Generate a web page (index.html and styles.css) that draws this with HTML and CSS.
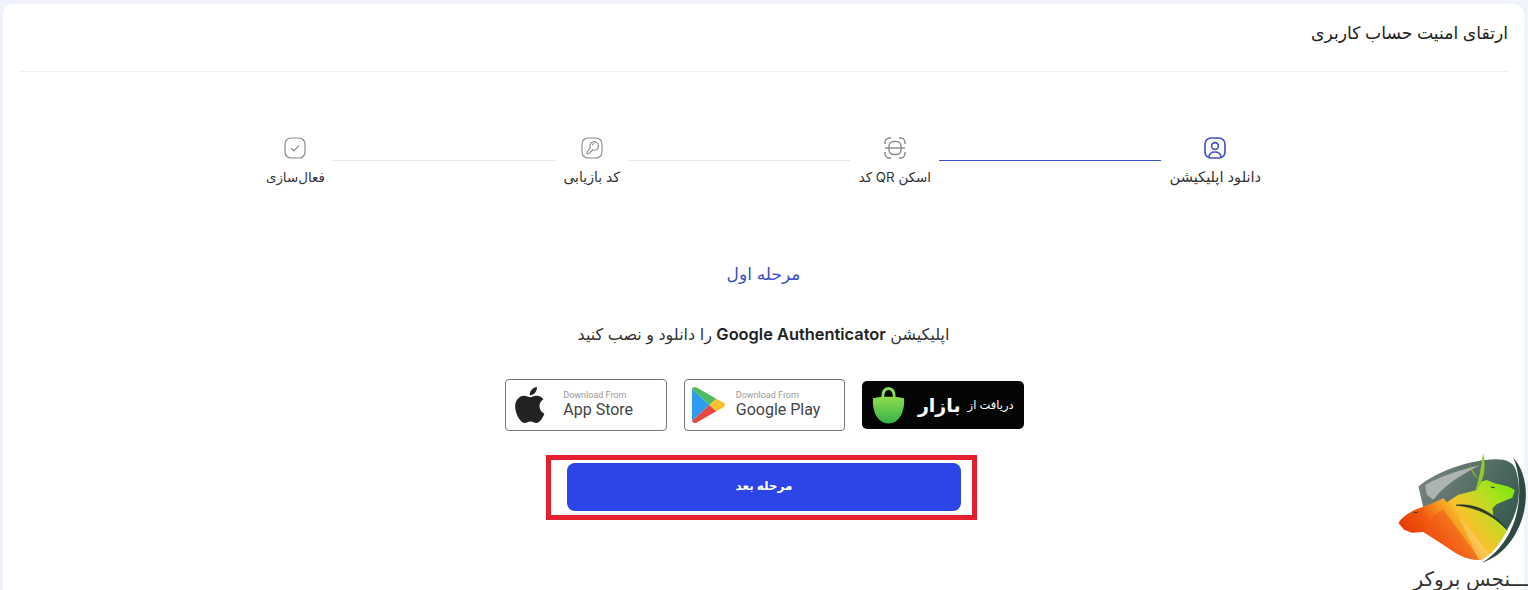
FILE: index.html
```html
<!DOCTYPE html>
<html lang="fa" dir="rtl">
<head>
  <meta charset="UTF-8" />
  <title>ارتقای امنیت حساب کاربری</title>
  <link rel="stylesheet" href="styles.css">
</head>
<body>
  <div class="card">
    <div class="card-title">ارتقای امنیت حساب کاربری</div>

    <div class="steps">
      <div class="step step-active">
        <svg class="step-icon" viewBox="0 0 22 22" fill="none" stroke="currentColor" stroke-width="1.6">
          <rect x="1" y="1" width="20" height="20" rx="6"/>
          <circle cx="11" cy="9" r="3.4"/>
          <path d="M4.800 20c.6-3.400 3-5 6.200-5s5.600 1.600 6.200 5"/>
        </svg>
        <div class="step-label step-label-wide">دانلود اپلیکیشن</div>
      </div>
      <div class="step-line step-line-active"></div>
      <div class="step">
        <svg class="step-icon" viewBox="0 0 22 22" fill="none" stroke="currentColor" stroke-width="1.4">
          <path d="M1 7V5.500A4.500 4.500 0 0 1 5.500 1H7M15 1h1.500A4.500 4.500 0 0 1 21 5.500V7M21 15v1.500a4.500 4.500 0 0 1-4.500 4.500H15M7 21H5.500A4.500 4.500 0 0 1 1 16.500V15"/>
          <rect x="5" y="4.500" width="12" height="13" rx="4.500"/>
          <path d="M1 11h20"/>
        </svg>
        <div class="step-label step-label-narrow">اسکن QR کد</div>
      </div>
      <div class="step-line"></div>
      <div class="step">
        <svg class="step-icon" viewBox="0 0 22 22" fill="none" stroke="currentColor" stroke-width="1.1">
          <rect x="1" y="1" width="20" height="20" rx="6"/>
          <path d="M9.300 10.800a4.300 4.300 0 1 1 2.400 2.200L7.800 16.600a1.100 1.100 0 0 1-1.600-.1 1.100 1.100 0 0 1-.1-1.500z"/>
          <path d="M11.200 8.500a2.200 2.200 0 0 1 2.200-2"/>
        </svg>
        <div class="step-label">کد بازیابی</div>
      </div>
      <div class="step-line"></div>
      <div class="step">
        <svg class="step-icon" viewBox="0 0 22 22" fill="none" stroke="currentColor" stroke-width="1.2">
          <rect x="1" y="1" width="20" height="20" rx="6"/>
          <path d="M7.200 11.200l2.700 2.600 5-5.200"/>
        </svg>
        <div class="step-label step-label-narrow">فعال‌سازی</div>
      </div>
    </div>

    <div class="stage-title">مرحله اول</div>
    <p class="stage-text">اپلیکیشن <strong>Google Authenticator</strong> را دانلود و نصب کنید</p>

    <div class="stores">
      <div class="store store-bazaar">
        <span class="bazaar-from">دریافت از</span>
        <span class="bazaar-name">بازار</span>
        <svg class="bazaar-bag" viewBox="0 0 34 39">
          <defs>
            <linearGradient id="bagFill" x1="0" y1="0" x2="0" y2="1">
              <stop offset="0" stop-color="#8fdc4c"/>
              <stop offset="1" stop-color="#35b24a"/>
            </linearGradient>
          </defs>
          <path d="M11 12c0-6 2-10 6-10s6 4 6 10" fill="none" stroke="#8fdc4c" stroke-width="3"/>
          <path d="M1 12c10-2 22-2 32 0 1 14-5 26-16 26S0 26 1 12z" fill="url(#bagFill)"/>
        </svg>
      </div>

      <div class="store">
        <div class="store-text">
          <span class="store-small">Download From</span>
          <span class="store-name">Google Play</span>
        </div>
        <svg class="store-logo logo-play" viewBox="0 0 36 38">
          <path d="M1 2.500v33L19 19z" fill="#2d9cf0"/>
          <path d="M1 2.500c.6-2 3-2.600 5-1.500l20 11.500L19 19z" fill="#4fbb63"/>
          <path d="M1 35.500c.6 2 3 2.600 5 1.500l20-11.500L19 19z" fill="#e8483f"/>
          <path d="M26 12.500l7.500 4.300c2 1.200 2 3.200 0 4.400L26 25.500 19 19z" fill="#fbc02d"/>
        </svg>
      </div>

      <div class="store">
        <div class="store-text">
          <span class="store-small">Download From</span>
          <span class="store-name">App Store</span>
        </div>
        <svg class="store-logo logo-apple" viewBox="3.900 2 16.400 20">
          <path fill="#222" d="M18.710 19.500c-.83 1.240-1.710 2.450-3.050 2.470-1.340.03-1.770-.79-3.290-.79-1.530 0-2 .77-3.270.82-1.310.05-2.300-1.320-3.140-2.530C4.250 17 2.940 12.450 4.700 9.390c.87-1.520 2.430-2.480 4.120-2.510 1.280-.02 2.500.87 3.290.87.78 0 2.260-1.070 3.810-.91.65.03 2.470.26 3.640 1.980-.09.06-2.170 1.280-2.150 3.810.03 3.020 2.650 4.030 2.680 4.040-.03.07-.42 1.440-1.380 2.830M13 3.500c.73-.83 1.940-1.460 2.940-1.500.13 1.170-.34 2.350-1.040 3.190-.69.85-1.830 1.510-2.950 1.420-.15-1.150.41-2.350 1.050-3.110z"/>
        </svg>
      </div>
    </div>

    <div class="next-box">
      <button class="next-btn">مرحله بعد</button>
    </div>
  </div>

  <!-- watermark over the page corner -->
  <div class="watermark">
    <svg class="watermark-logo" viewBox="0 0 444 370">
      <defs>
        <linearGradient id="shieldFill" x1="0" y1="0" x2="1" y2="0.600">
          <stop offset="0" stop-color="#7e8685"/>
          <stop offset="1" stop-color="#33594b"/>
        </linearGradient>
        <linearGradient id="bodyFill" x1="0" y1="0.650" x2="1" y2="0.150">
          <stop offset="0" stop-color="#e63206"/>
          <stop offset="0.250" stop-color="#f0590f"/>
          <stop offset="0.520" stop-color="#f8c12c"/>
          <stop offset="0.780" stop-color="#b6e021"/>
          <stop offset="1" stop-color="#7ee80e"/>
        </linearGradient>
      </defs>
      <path d="M115 125C175 75 275 45 345 43c30-1 55 7 63 32 17 55 12 115-23 175l-85 95-170-155z" fill="url(#shieldFill)"/>
      <path d="M135 120C190 90 250 72 300 62c-60 28-110 63-140 103l-20-15z" fill="#adb3b1"/>
      <path d="M400 38c25 25 40 70 38 120-3 80-50 170-133 197 65-40 105-110 112-190 4-50-2-95-17-127z" fill="#2f4a40"/>
      <path d="M55 235c5-10 20-25 45-38l30-12c20-7 40-15 60-25l10 12 35-22 55-15 15-25 15-5 25 10 40 10 20 10-7 23-48 20-12 12 2 25 42 40c-22 45-47 75-77 90-40 5-80-20-115-45l-60-38-35 2-23-9z" fill="url(#bodyFill)"/>
      <path d="M190 195l110 150c-40 5-75-20-110-45l-60-38c10-32 30-52 60-67z" fill="#f2561a" opacity="0.550"/>
      <path d="M235 210l95 120c-15 10-25 15-35 15z" fill="#ffe08a" opacity="0.400"/>
      <path d="M310 25c10 45 2 85-25 115 15-40 18-80 25-115z" fill="#8ecb2b"/>
      <path d="M268 55c7 20 17 35 29 48-12-8-25-23-29-48z" fill="#8ecb2b"/>
      <path d="M228 181c50-6 110 15 155 76-45-50-100-70-155-76z" fill="#2c3a2a" stroke="#2c3a2a" stroke-width="2"/>
      <path d="M100 204l14-2M333 126l12 3" stroke="#333" stroke-width="3" fill="none"/>
    </svg>
    <div class="watermark-text">ـــنجس بروکر</div>
  </div>
</body>
</html>
```

FILE: styles.css
```css
html, body {
  height: 100%;
}
body {
  margin: 0;
  padding: 4px 4px 0 3px;
  box-sizing: border-box;
  background: #f0f3fc;
  font-family: Inter, "DejaVu Sans", sans-serif;
  color: #222;
  overflow: hidden;
}
.card {
  height: 100%;
  box-sizing: border-box;
  background: #fff;
  border-radius: 10px 10px 0 0;
  padding: 0 16px;
  text-align: center;
}
.card-title {
  height: 67px;
  line-height: 58px;
  border-bottom: 1px solid #eeeff2;
  text-align: right;
  font-size: 17.200px;
  font-weight: 500;
}

.steps {
  display: flex;
  justify-content: center;
  gap: 8.300px;
  margin-top: 65px;
}
.step {
  display: flex;
  flex-direction: column;
  align-items: center;
  color: #8a8a8a;
}
.step-active {
  color: #3a50c4;
}
.step-icon {
  width: 22px;
  height: 22px;
}
.step-label {
  margin-top: 9px;
  font-size: 14px;
  line-height: 18px;
  color: #333;
  white-space: nowrap;
}
.step-label-wide {
  font-size: 14.600px;
}
.step-label-narrow {
  font-size: 13.400px;
}
.step-line {
  width: 222px;
  height: 1px;
  margin-top: 23px;
  background: #e6e7ea;
}
.step-line-active {
  background: #3a50c4;
}

.stage-title {
  margin-top: 76px;
  font-size: 17px;
  line-height: 24px;
  color: #3a50c4;
}
.stage-text {
  margin: 36px 0 0;
  font-size: 16px;
  line-height: 24px;
  color: #333;
}
.stage-text strong {
  font-weight: 600;
  font-size: 16.400px;
  color: #222;
}

.stores {
  display: flex;
  justify-content: center;
  align-items: center;
  gap: 17px;
  margin-top: 33px;
  padding-left: 2px;
}
.store {
  display: flex;
  align-items: center;
  width: 161.500px;
  height: 52px;
  box-sizing: border-box;
  border: 1px solid #777;
  border-radius: 4px;
  background: #fff;
}
.store-logo {
  flex: none;
}
.logo-apple {
  width: 30px;
  height: 36px;
  margin: 0 18px 0 9px;
}
.logo-play {
  width: 35px;
  height: 38px;
  margin: 0 10px 0 6px;
}
.store-text {
  flex: 1;
  display: flex;
  flex-direction: column;
  direction: ltr;
  text-align: left;
}
.store-small {
  font-family: Roboto, sans-serif;
  font-size: 9px;
  line-height: 10px;
  color: #999;
}
.store-name {
  font-family: Roboto, sans-serif;
  font-size: 16px;
  line-height: 20px;
  color: #444;
}
.store-bazaar {
  height: 48px;
  background: #050505;
  border: 0;
  border-radius: 5px;
  gap: 7px;
  padding: 0 10px;
  color: #fff;
}
.bazaar-from {
  font-size: 11.500px;
  white-space: nowrap;
}
.bazaar-name {
  font-size: 19px;
  font-weight: 700;
  white-space: nowrap;
}
.bazaar-bag {
  width: 33px;
  height: 39px;
  margin-right: auto;
}

.next-box {
  width: 431px;
  box-sizing: border-box;
  margin: 24px auto 0 527px;
  padding: 3px 11px 4px 16px;
  border: 5px solid #e5202e;
}
.next-btn {
  display: block;
  width: 100%;
  height: 48px;
  padding: 0 0 4px;
  border: 0;
  border-radius: 8px;
  background: #2b45e6;
  color: #fff;
  font-family: inherit;
  font-size: 12px;
  font-weight: 700;
}

.watermark {
  position: absolute;
  right: 0;
  bottom: 0;
  width: 148px;
  height: 145px;
  overflow: hidden;
}
.watermark-logo {
  display: block;
  width: 148px;
  height: 123px;
}
.watermark-text {
  font-size: 20px;
  line-height: 22px;
  white-space: nowrap;
  color: #333;
}
```
